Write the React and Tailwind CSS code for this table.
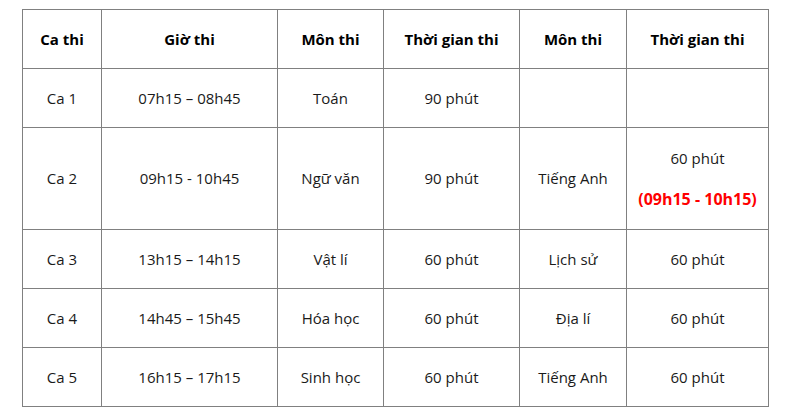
const rows = [
  { ca: "Ca 1", gio: "07h15 – 08h45", mon: "Toán", tg: "90 phút", mon2: "", tg2: "", h: "h-[59px]" },
  { ca: "Ca 2", gio: "09h15 - 10h45", mon: "Ngữ văn", tg: "90 phút", mon2: "Tiếng Anh", tg2: "special", h: "h-[102px]" },
  { ca: "Ca 3", gio: "13h15 – 14h15", mon: "Vật lí", tg: "60 phút", mon2: "Lịch sử", tg2: "60 phút", h: "h-[59px]" },
  { ca: "Ca 4", gio: "14h45 – 15h45", mon: "Hóa học", tg: "60 phút", mon2: "Địa lí", tg2: "60 phút", h: "h-[59px]" },
  { ca: "Ca 5", gio: "16h15 – 17h15", mon: "Sinh học", tg: "60 phút", mon2: "Tiếng Anh", tg2: "60 phút", h: "h-[59px]" },
];

const cell = "border border-[#808080] text-center align-middle p-0 pb-[1px]";

export default function App() {
  return (
    <div className="bg-white w-[785px] h-[414px] pt-[9px] pl-[22px] font-['Open_Sans','Noto_Sans',sans-serif] text-[15px] leading-[20px] text-[#1a1a1a]">
      <table className="border-collapse table-fixed w-[746px]">
        <colgroup>
          <col className="w-[79px]" />
          <col className="w-[176px]" />
          <col className="w-[106px]" />
          <col className="w-[136px]" />
          <col className="w-[107px]" />
          <col className="w-[142px]" />
        </colgroup>
        <thead>
          <tr className="h-[59px] font-bold text-black">
            <th className={cell}>Ca thi</th>
            <th className={cell}>Giờ thi</th>
            <th className={cell}>Môn thi</th>
            <th className={cell}>Thời gian thi</th>
            <th className={cell}>Môn thi</th>
            <th className={cell}>Thời gian thi</th>
          </tr>
        </thead>
        <tbody>
          {rows.map((r) => (
            <tr key={r.ca} className={r.h}>
              <td className={cell}>{r.ca}</td>
              <td className={cell}>{r.gio}</td>
              <td className={cell}>{r.mon}</td>
              <td className={cell}>{r.tg}</td>
              <td className={cell}>{r.mon2}</td>
              <td className={cell}>
                {r.tg2 === "special" ? (
                  <div className="flex flex-col items-center gap-[21px]">
                    <span>60 phút</span>
                    <span className="font-bold text-[16px] text-[#f00]">(09h15 - 10h15)</span>
                  </div>
                ) : (
                  r.tg2
                )}
              </td>
            </tr>
          ))}
        </tbody>
      </table>
    </div>
  );
}
